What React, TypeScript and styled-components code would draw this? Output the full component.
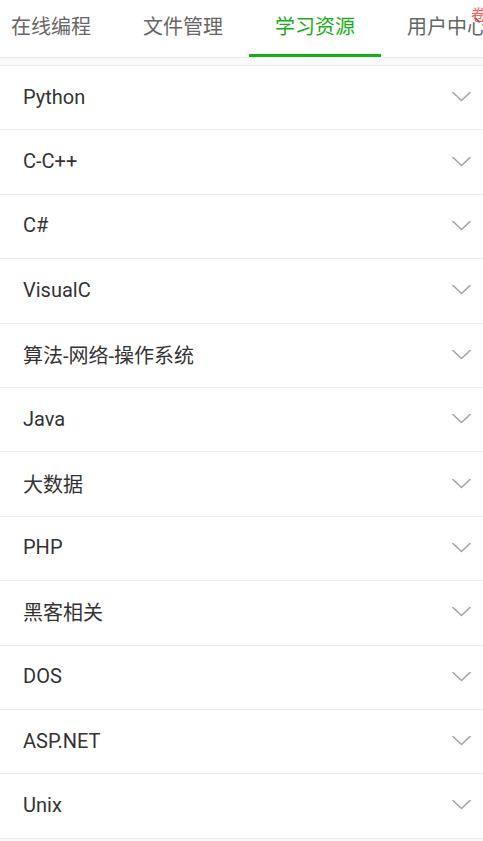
import * as React from "react"
import styled, {createGlobalStyle} from "styled-components"

const GlobalStyle = createGlobalStyle`
  html, body {
    margin: 0;
    padding: 0;
    background: #ffffff;
    font-family: Roboto, "Noto Sans CJK SC", sans-serif;
  }
`

const Page = styled.div`
  width: 483px;
  height: 841px;
  overflow: hidden;
  background: #fafafa;
`

const TabBar = styled.div`
  position: relative;
  height: 57px;
  background: #ffffff;
  border-bottom: 1px solid #ececec;
  overflow: hidden;
`

const TabTrack = styled.div`
  display: flex;
  margin-left: -15px;
  height: 100%;
`

const Tab = styled.div<{ $active?: boolean }>`
  position: relative;
  flex: 0 0 132px;
  display: flex;
  align-items: center;
  justify-content: center;
  padding-bottom: 6px;
  box-sizing: border-box;
  font-size: 20px;
  color: ${p => (p.$active ? "#1aad19" : "#666666")};
  white-space: nowrap;

  &::after {
    content: "";
    display: ${p => (p.$active ? "block" : "none")};
    position: absolute;
    left: 0;
    right: 0;
    bottom: -1px;
    height: 4px;
    background: #1aad19;
  }
`

const Badge = styled.span`
  position: absolute;
  top: 8px;
  left: 90px;
  font-size: 15px;
  line-height: 15px;
  color: #ff4040;
  opacity: 0.85;
`

const List = styled.div`
  margin-top: 7px;
  background: #ffffff;
  border-top: 1px solid #ececec;
`

const Row = styled.div`
  display: flex;
  align-items: center;
  justify-content: space-between;
  box-sizing: border-box;
  height: 64.4px;
  padding: 0 12px 2px 23px;
  border-bottom: 1px solid #ececec;
`

const Title = styled.span`
  font-size: 20px;
  color: #333333;
`

const Chevron = () => (
  <svg width="19" height="11" viewBox="0 0 19 11" fill="none">
    <path d="M1 1.5 L9.5 9.5 L18 1.5" stroke="#a3a3a3" strokeWidth="1.6" strokeLinecap="round" strokeLinejoin="round" />
  </svg>
)

const tabs = ["在线编程", "文件管理", "学习资源", "用户中心"]

const topics = [
  "Python",
  "C-C++",
  "C#",
  "VisualC",
  "算法-网络-操作系统",
  "Java",
  "大数据",
  "PHP",
  "黑客相关",
  "DOS",
  "ASP.NET",
  "Unix",
]

export default function App() {
  return (
    <Page>
      <GlobalStyle />
      <TabBar>
        <TabTrack>
          {tabs.map((t, i) => (
            <Tab key={t} $active={i === 2}>
              {t}
              {i === 3 && <Badge>卷</Badge>}
            </Tab>
          ))}
        </TabTrack>
      </TabBar>
      <List>
        {topics.map(t => (
          <Row key={t}>
            <Title>{t}</Title>
            <Chevron />
          </Row>
        ))}
      </List>
    </Page>
  )
}
